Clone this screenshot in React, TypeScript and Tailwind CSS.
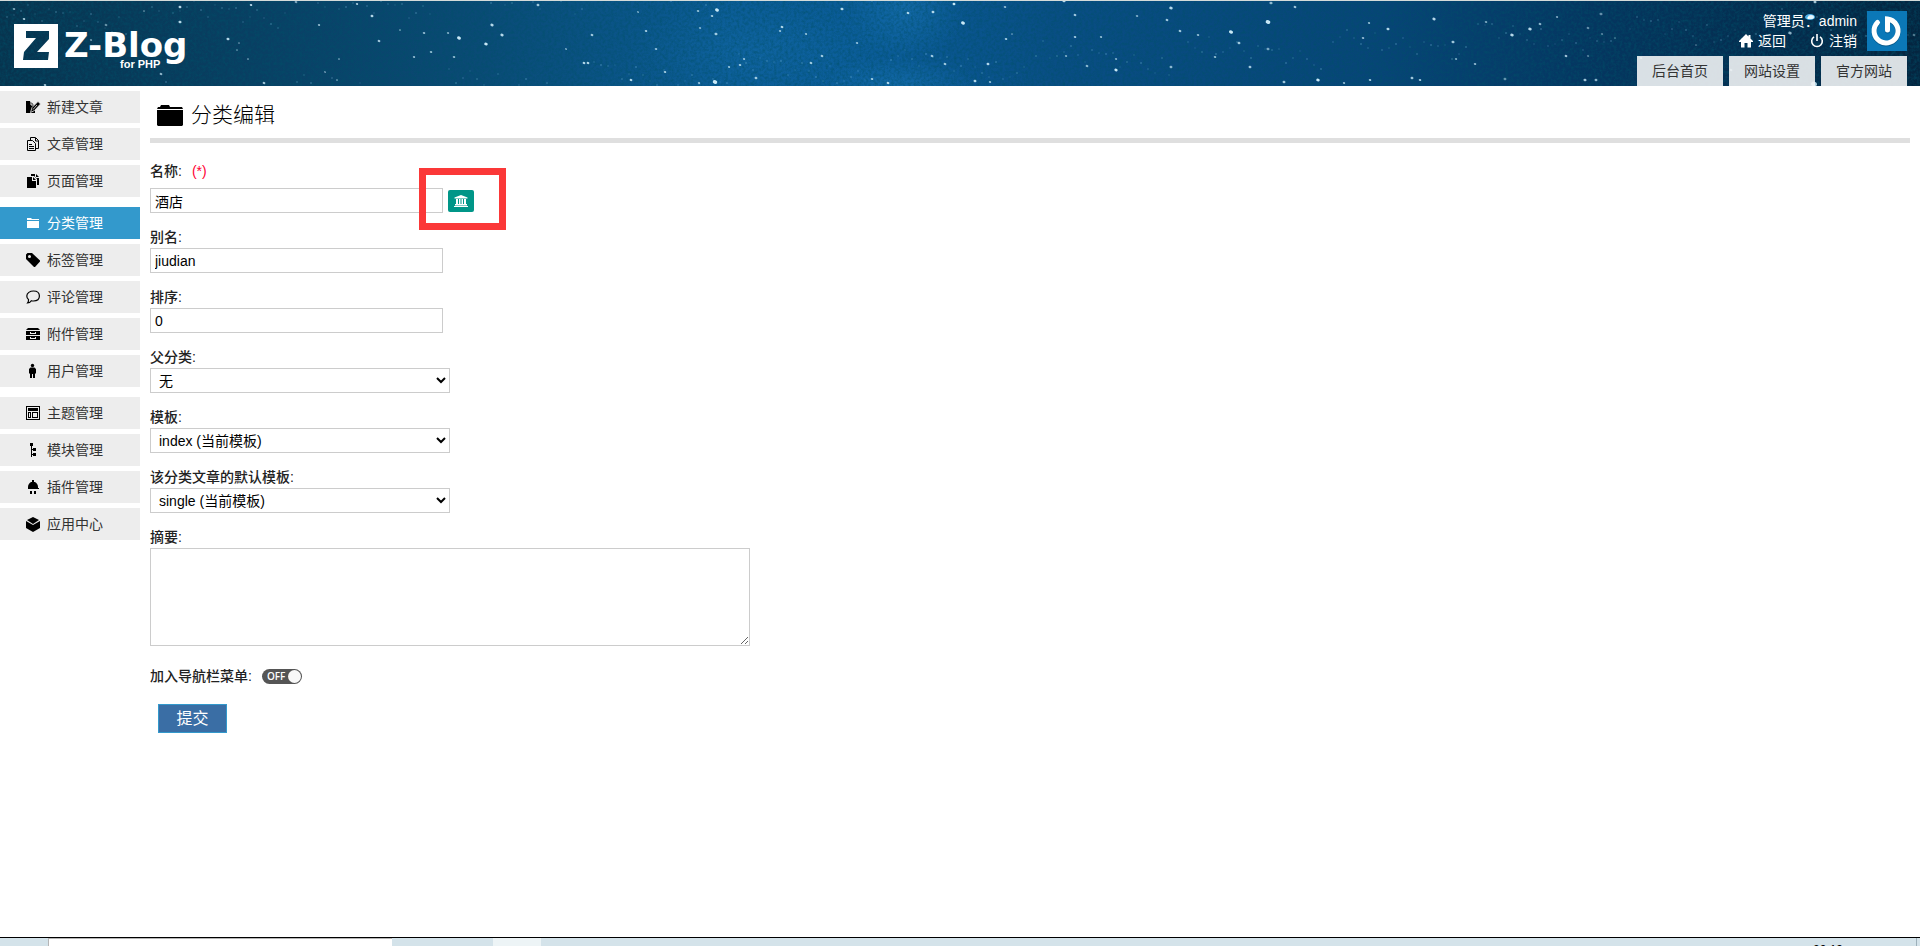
import type { ReactNode } from "react";

// x, y, radius, opacity
const STARS: number[][] = [
    [14, 9, 1.3, 0.6], [24, 19, 1.3, 0.8], [180, 7, 1.5, 0.9], [180, 22, 1.6, 0.9], [144, 11, 1, 0.5], [106, 25, 1.4, 0.5],
    [91, 40, 1.2, 0.5], [45, 85, 1.3, 0.8], [161, 74, 1.4, 0.7], [251, 5, 1.3, 0.9], [296, 2, 1.4, 0.6], [357, 4, 1.2, 0.8],
    [372, 16, 1.5, 0.9], [228, 39, 1.6, 0.9], [239, 43, 1, 0.5], [237, 50, 1, 0.5], [248, 59, 1, 0.6], [264, 83, 1.4, 0.8],
    [319, 25, 1.2, 0.7], [325, 72, 1.1, 0.5], [337, 80, 1, 0.6], [339, 59, 1, 0.6], [379, 41, 1.4, 0.8], [400, 30, 1, 0.6],
    [414, 57, 1.2, 0.7], [424, 33, 1.3, 0.7], [431, 52, 1.3, 0.7], [454, 57, 1.3, 0.7], [459, 38, 2, 1], [448, 33, 1.2, 0.6],
    [492, 25, 1.7, 0.9], [502, 35, 1.7, 0.9], [486, 44, 1.8, 1], [538, 5, 1.5, 0.8], [592, 35, 1.4, 0.8], [584, 63, 1.4, 0.9],
    [588, 63, 1.4, 0.9], [566, 49, 1.1, 0.6], [656, 49, 1.3, 0.7], [646, 31, 1.3, 0.8], [638, 12, 1.1, 0.6], [698, 11, 1.3, 0.7],
    [717, 10, 2, 1], [712, 16, 1.3, 0.8], [716, 34, 1.6, 0.8], [700, 28, 1.2, 0.6], [715, 82, 2.3, 1], [665, 72, 1.3, 0.8],
    [631, 80, 1.4, 0.9], [699, 83, 1.2, 0.7], [740, 65, 1.3, 0.8], [744, 59, 1.2, 0.7], [729, 67, 1.2, 0.7], [756, 78, 1.5, 0.8],
    [782, 27, 1.4, 0.9], [780, 31, 1.2, 0.7], [806, 34, 1.2, 0.7], [811, 63, 1.4, 0.8], [822, 56, 1.4, 0.8], [842, 9, 1.6, 0.9],
    [857, 43, 1.2, 0.7], [872, 79, 1.3, 0.8], [888, 83, 1.4, 0.9], [908, 13, 1.4, 0.9], [933, 12, 1.5, 0.9], [954, 4, 1.5, 1],
    [963, 23, 2, 1], [932, 56, 1.4, 0.8], [945, 64, 1.4, 0.8], [988, 64, 1.5, 0.9], [975, 81, 1.5, 0.9], [990, 82, 1.2, 0.7],
    [1006, 39, 1.3, 0.8], [1012, 34, 1, 0.5], [1064, 1, 1.6, 0.9], [1005, 7, 1.3, 0.7], [1075, 15, 1.4, 0.8], [1075, 37, 1.3, 0.8],
    [1101, 37, 1.2, 0.7], [1087, 66, 1.4, 0.7], [1116, 70, 1.7, 1], [1116, 59, 1.2, 0.6], [1066, 56, 1.2, 0.6], [1137, 16, 1.3, 0.6],
    [1171, 8, 1.8, 0.9], [1167, 20, 1.4, 0.8], [1180, 31, 1.4, 0.8], [1198, 35, 1.3, 0.7], [1171, 67, 1.5, 0.7], [1215, 57, 1.3, 0.7],
    [1231, 32, 2.1, 1], [1239, 43, 1.5, 0.8], [1250, 67, 1.5, 0.8], [1268, 22, 2.4, 1], [1268, 49, 1.6, 0.6], [1271, 3, 1.6, 0.7],
    [1295, 7, 1.4, 0.8], [1284, 82, 1.5, 0.8], [1318, 80, 1.8, 1], [1344, 83, 1.2, 0.7], [1370, 80, 1.3, 0.8], [1369, 23, 1.2, 0.7],
    [1388, 29, 1.6, 0.9], [1363, 38, 1.3, 0.7], [1412, 78, 1.5, 0.8], [1420, 80, 1.3, 0.8], [1434, 19, 1.7, 0.9], [1453, 42, 1.6, 0.8],
    [1456, 59, 1.2, 0.6], [1475, 64, 1.3, 0.7], [1486, 22, 1.3, 0.6], [1512, 35, 1.8, 0.9], [1530, 29, 1.8, 0.9], [1540, 24, 1.4, 0.7],
    [1505, 79, 1.5, 0.5], [1557, 17, 1.2, 0.6], [1601, 14, 1.6, 0.5], [1588, 28, 1.4, 0.5], [1602, 34, 1.2, 0.4], [1588, 56, 1.2, 0.4],
    [1566, 56, 1.4, 0.8], [1585, 80, 1.6, 0.8], [1596, 80, 1.5, 0.7], [1615, 38, 1, 0.4], [1641, 58, 1.3, 0.7], [1696, 45, 1, 0.4],
    [1790, 33, 1.8, 0.7], [1815, 2, 1.6, 0.8], [1914, 35, 1.4, 0.4], [1814, 84, 3, 0.9], [1731, 70, 1.4, 0.7],
];

// small dim stars scattered between the bright ones
const DUST = Array.from({ length: 260 }, (_, i) => [(i * 739) % 1920, (i * 53 + ((i * i) % 17)) % 86, 0.1 + (i % 5) * 0.05]);

function StarrySky() {
    return (
        <svg className="absolute inset-0 h-full w-full" viewBox="0 0 1920 86" preserveAspectRatio="xMidYMid slice" aria-hidden="true">
            <defs>
                <linearGradient id="sky">
                    <stop offset="0" stopColor="#07344f" />
                    <stop offset="0.13" stopColor="#093f63" />
                    <stop offset="0.25" stopColor="#0a4b76" />
                    <stop offset="0.38" stopColor="#0b5c96" />
                    <stop offset="0.46" stopColor="#0a5b97" />
                    <stop offset="0.55" stopColor="#094e84" />
                    <stop offset="0.72" stopColor="#074577" />
                    <stop offset="0.82" stopColor="#053762" />
                    <stop offset="1" stopColor="#042540" />
                </linearGradient>
                <radialGradient id="glow">
                    <stop offset="0" stopColor="#1f7fc0" stopOpacity="0.4" />
                    <stop offset="1" stopColor="#1f7fc0" stopOpacity="0" />
                </radialGradient>
                <filter id="grain" x="0" y="0" width="100%" height="100%">
                    <feTurbulence type="fractalNoise" baseFrequency="0.35" numOctaves="3" seed="4" />
                    <feColorMatrix values="0 0 0 0 0  0 0 0 0 0.08  0 0 0 0 0.14  1.4 0 0 0 -0.5" />
                </filter>
            </defs>
            <rect width="1920" height="86" fill="url(#sky)" />
            <ellipse cx="905" cy="10" rx="60" ry="50" fill="url(#glow)" />
            <ellipse cx="900" cy="86" rx="80" ry="30" fill="url(#glow)" />
            <ellipse cx="760" cy="50" rx="130" ry="50" fill="url(#glow)" opacity="0.5" />
            <rect width="1920" height="86" filter="url(#grain)" opacity="0.8" />
            {DUST.map(([x, y, o], i) => (
                <circle key={i} cx={x} cy={y} r="1" fill="#7fc0e4" opacity={o} />
            ))}
            {STARS.map(([x, y, r, o], i) => (
                <ellipse key={i} cx={x} cy={y} rx={r} ry={r * 0.8} fill="#c8e8f6" opacity={o} transform={`rotate(20 ${x} ${y})`} />
            ))}
            <ellipse cx="1810" cy="17" rx="5" ry="3" fill="#4fb0ea" />
            <ellipse cx="1811" cy="17" rx="3" ry="2" fill="#e4f6ff" />
            <rect width="1920" height="1" fill="#d5dbd9" />
        </svg>
    );
}

const ICONS: Record<string, ReactNode> = {
    write: (
        <>
            <path d="M0 1h4l5 5v7H0z" />
            <path d="M4 1h1v4h4" fill="none" stroke="#ededed" />
            <path d="M4.500 12.500l1.500-5L12 1.500l2.500 2.500-6 6.500z" stroke="#ededed" strokeWidth="0.800" />
            <path d="M7 9.500l4-4.500" stroke="#ededed" strokeWidth="0.800" />
        </>
    ),
    pages: (
        <g fill="none" stroke="currentColor">
            <path d="M1.500 3.500h5l3 3v7h-8z" />
            <path d="M4.500 3V.500h5l3 3v8h-3M9.500 1v3h3M3 7.500h3M3 9.500h5M3 11.500h5" />
        </g>
    ),
    copy: (
        <>
            <path d="M1 3h5v4h4v7H1z" />
            <path d="M7 3l3 3H7z" />
            <path d="M5 0h4v4h4v7h-2V5L8 2H5z" />
            <path d="M10 0l3 3h-3z" />
        </>
    ),
    folder: <path d="M1 3V2h4l1 1h7v1H1zM1 5h12v7H1z" />,
    tag: <path fillRule="evenodd" d="M0 1.500L1.500 0H6l8 7.500v1L9 14H8L0 6zM3.500 2a1.500 1.500 0 100 3 1.500 1.500 0 000-3z" />,
    chat: (
        <path
            d="M7.500 1C11 1 13.400 3 13.400 6S11 11 7.500 11c-.8 0-1.600-.1-2.200-.3C4.500 12 3 13 1.500 13c.8-1 1.200-2.200 1-3.400C1.200 8.700.8 7.400.8 6 .8 3 4 1 7.500 1z"
            fill="none"
            stroke="currentColor"
            strokeWidth="1.200"
        />
    ),
    drawer: (
        <>
            <path d="M2 1h10l2 2H0z" />
            <path fillRule="evenodd" d="M0 4h14v4H0zM4 5v2h6V5H9v1H5V5z" />
            <path fillRule="evenodd" d="M0 9h14v4H0zM4 10v2h6v-2H9v1H5v-1z" />
        </>
    ),
    person: (
        <>
            <circle cx="6.500" cy="1.500" r="1.700" />
            <path d="M4.500 3.500h4L10 5v4.500H9V14H7v-4H6v4H4V9.500H3V5z" />
        </>
    ),
    layout: (
        <>
            <path fillRule="evenodd" d="M0 0h14v14H0zM1 1v12h12V1z" />
            <path d="M2 2h10v3H2z" />
            <path fillRule="evenodd" d="M2 6h3v6H2zM3 7v4h1V7zM6 6h6v6H6zM7 7v4h4V7z" />
        </>
    ),
    tree: <path d="M4 0h3v3H6v3h1V5h3v3H7V7H6v4h1v-1h3v3H7v-1H6v2H5V3H4z" />,
    plug: <path d="M6 0h2v2h1c2 1 3 3 3 5v1h1v1H2V8V7c0-2 1-4 3-5h1zM4 11h2v3H4zM8 11h2v3H8z" />,
    box: (
        <>
            <path d="M7 0l6 3-6 4-6-4z" />
            <path d="M0 4l7 4 7-4v7l-7 4-7-4z" />
        </>
    ),
};

const MENU = [
    [
        { icon: "write", text: "新建文章" },
        { icon: "pages", text: "文章管理" },
        { icon: "copy", text: "页面管理" },
    ],
    [
        { icon: "folder", text: "分类管理", active: true },
        { icon: "tag", text: "标签管理" },
        { icon: "chat", text: "评论管理" },
        { icon: "drawer", text: "附件管理" },
        { icon: "person", text: "用户管理" },
    ],
    [
        { icon: "layout", text: "主题管理" },
        { icon: "tree", text: "模块管理" },
        { icon: "plug", text: "插件管理" },
        { icon: "box", text: "应用中心" },
    ],
];

const TABS = ["后台首页", "网站设置", "官方网站"];

function Header() {
    return (
        <header className="relative h-[86px] overflow-hidden bg-[#07344f]">
            <StarrySky />
            <div className="relative flex h-full justify-between pl-3.5 pr-[13px]">
                <a href="#" className="relative mt-6 flex h-11 text-white">
                    <svg className="h-11 w-11" viewBox="0 0 44 44" fill="currentColor" aria-hidden="true">
                        <path fillRule="evenodd" d="M0 0h44v44H0zM12 7v7h10L10 28l-1 8h25l1-8H23l12-13V7z" />
                    </svg>
                    <span className="ml-1.5 font-['DejaVu_Sans'] text-[34px] font-bold leading-[42px]">Z-Blog</span>
                    <span className="absolute left-[106px] top-[34px] text-[11px] font-bold leading-3">for PHP</span>
                </a>
                <div className="flex flex-col items-end justify-between">
                    <div className="mt-[11px] flex gap-2.5 text-sm leading-5 text-white">
                        <div className="text-right">
                            <p>管理员：admin</p>
                            <p className="flex justify-end gap-6">
                                <a href="#" className="flex items-center gap-[5px]">
                                    <svg className="h-3.5 w-3.5" viewBox="0 0 14 14" fill="currentColor" aria-hidden="true">
                                        <path d="M7 0l2.500 2.500V1h2v3.500L14 7v1h-2v5.500H8.500V9h-3v4.500H2V8H0V7z" />
                                    </svg>
                                    返回
                                </a>
                                <a href="#" className="flex items-center gap-[5px]">
                                    <svg className="h-3.5 w-3.5" viewBox="0 0 14 14" fill="none" stroke="currentColor" strokeWidth="1.600" aria-hidden="true">
                                        <path d="M4 2.800a5.300 5.300 0 106 0M7 0v7" />
                                    </svg>
                                    注销
                                </a>
                            </p>
                        </div>
                        <svg className="h-10 w-10" viewBox="0 0 40 40" role="img" aria-label="admin">
                            <rect width="40" height="40" fill="#0b78b8" />
                            <g fill="none" strokeLinecap="round" strokeWidth="5">
                                <path d="M10.500 11.500a12 12 0 1010-3.500v11" stroke="#075a8c" transform="translate(0 1)" />
                                <path d="M10.500 11.500a12 12 0 1010-3.500v11" stroke="#fff" />
                            </g>
                        </svg>
                    </div>
                    <nav className="flex gap-1.5">
                        {TABS.map((tab) => (
                            <a key={tab} href="#" className="w-[86px] bg-[#f1f3f4]/90 text-center text-sm leading-[30px] text-[#333]">
                                {tab}
                            </a>
                        ))}
                    </nav>
                </div>
            </div>
        </header>
    );
}

function Sidebar() {
    return (
        <nav className="flex w-[140px] shrink-0 flex-col gap-2.5 pt-[5px]">
            {MENU.map((group, i) => (
                <ul key={i} className="flex flex-col gap-[5px]">
                    {group.map((item) => (
                        <li key={item.text}>
                            <a
                                href="#"
                                className={
                                    item.active
                                        ? "flex h-8 items-center gap-[7px] bg-[#3399cc] pl-[26px] text-sm text-white"
                                        : "flex h-8 items-center gap-[7px] bg-[#ededed] pl-[26px] text-sm text-[#333]"
                                }
                            >
                                <svg className={item.active ? "h-3.5 w-3.5 text-white" : "h-3.5 w-3.5 text-black"} viewBox="0 0 14 14" fill="currentColor" overflow="visible" aria-hidden="true">
                                    {ICONS[item.icon]}
                                </svg>
                                {item.text}
                            </a>
                        </li>
                    ))}
                </ul>
            ))}
        </nav>
    );
}

const LABEL = "block text-sm font-medium leading-[22px] text-[#222]";
const INPUT = "block h-[25px] w-[293px] border border-[#ccc] px-1 text-sm text-black";

function TextField({ id, label, value }: { id: string; label: string; value: string }) {
    return (
        <div>
            <label htmlFor={id} className={LABEL}>
                {label}:
            </label>
            <input id={id} type="text" defaultValue={value} className={INPUT} />
        </div>
    );
}

function SelectField({ id, label, option }: { id: string; label: string; option: string }) {
    return (
        <div>
            <label htmlFor={id} className={LABEL}>
                {label}:
            </label>
            <select id={id} className="block h-[25px] w-[300px] border border-[#ccc] bg-white px-1 text-sm text-black">
                <option>{option}</option>
            </select>
        </div>
    );
}

function CategoryForm() {
    return (
        <form className="flex flex-col gap-[13px] pt-[17px]">
            <div>
                <div className="flex gap-2.5">
                    <label htmlFor="name" className={LABEL}>
                        名称:
                    </label>
                    <span className="text-sm leading-[22px] text-[#ff0033]">(*)</span>
                </div>
                <div className="relative mt-1.5 flex items-center gap-[5px]">
                    <input id="name" type="text" defaultValue="酒店" className={INPUT} />
                    <button type="button" aria-label="icon" className="flex h-[22px] w-[26px] items-center justify-center rounded-xs bg-[#009688] text-white">
                        <svg className="h-3 w-3.5" viewBox="0 0 14 12" fill="currentColor" aria-hidden="true">
                            <path d="M7 0l6.500 2.500v1h-13v-1zM2 4h2v5H2zM5 4h1.500v5H5zM7.500 4H9v5H7.500zM10 4h2v5h-2zM1 9h12v1.500H1zM0 11h14v1H0z" />
                        </svg>
                    </button>
                    <div className="pointer-events-none absolute -top-5 left-[269px] h-[62px] w-[87px] border-[7px] border-[#fb3838]" />
                </div>
            </div>
            <TextField id="alias" label="别名" value="jiudian" />
            <TextField id="order" label="排序" value="0" />
            <SelectField id="parent" label="父分类" option="无" />
            <SelectField id="template" label="模板" option="index (当前模板)" />
            <SelectField id="log-template" label="该分类文章的默认模板" option="single (当前模板)" />
            <div>
                <label htmlFor="intro" className={LABEL}>
                    摘要:
                </label>
                <textarea id="intro" className="block h-[98px] w-[600px] border border-[#ccc] p-1 text-sm" />
            </div>
            <label className="mt-1.5 flex items-center gap-2.5 text-sm font-medium leading-[22px] text-[#222]">
                加入导航栏菜单:
                <input type="checkbox" className="sr-only" />
                <span className="flex h-[15px] w-10 items-center justify-between rounded-full bg-[#555] pl-[5px] pr-px font-['Open_Sans'] text-[10px] font-semibold leading-none text-white">
                    OFF
                    <span className="h-[13px] w-[13px] rounded-full bg-[#f8f8f8]" />
                </span>
            </label>
            <button type="submit" className="ml-2 mt-1 h-[29px] w-[69px] border border-[#3399cc] bg-[#3a6ea5] text-base leading-none text-white">
                提交
            </button>
        </form>
    );
}

export default function App() {
    return (
        <div className="flex min-h-screen flex-col bg-white font-['Liberation_Sans','Noto_Sans_CJK_SC',sans-serif]">
            <Header />
            <div className="flex grow gap-2.5 pr-2.5">
                <Sidebar />
                <main className="grow">
                    <h1 className="flex h-[57px] items-center gap-2 border-b-[5px] border-[#dfdfdf] pl-[7px] pt-1.5 text-[21px] font-light text-black">
                        <svg className="h-[22px] w-[26px]" viewBox="0 0 26 22" fill="#000" aria-hidden="true">
                            <path d="M1 3h2l1-2h8l1 2h12l1 2H0zM0 6h26v15l-1 1H1l-1-1z" />
                        </svg>
                        分类编辑
                    </h1>
                    <CategoryForm />
                </main>
            </div>
            {/* Taskbar */}
            <footer className="flex h-[9px] overflow-hidden border-t border-black bg-[#d4e3ea] text-xs text-black">
                <div className="ml-12 w-[344px] border-l border-t border-[#b5b5b5] bg-white" />
                <div className="ml-[101px] w-12 bg-[#edf4f6]" />
                <time className="ml-auto mr-[73px] mt-1">20:19</time>
                <div className="mr-[3px] w-px bg-[#9db0ba]" />
            </footer>
        </div>
    );
}
